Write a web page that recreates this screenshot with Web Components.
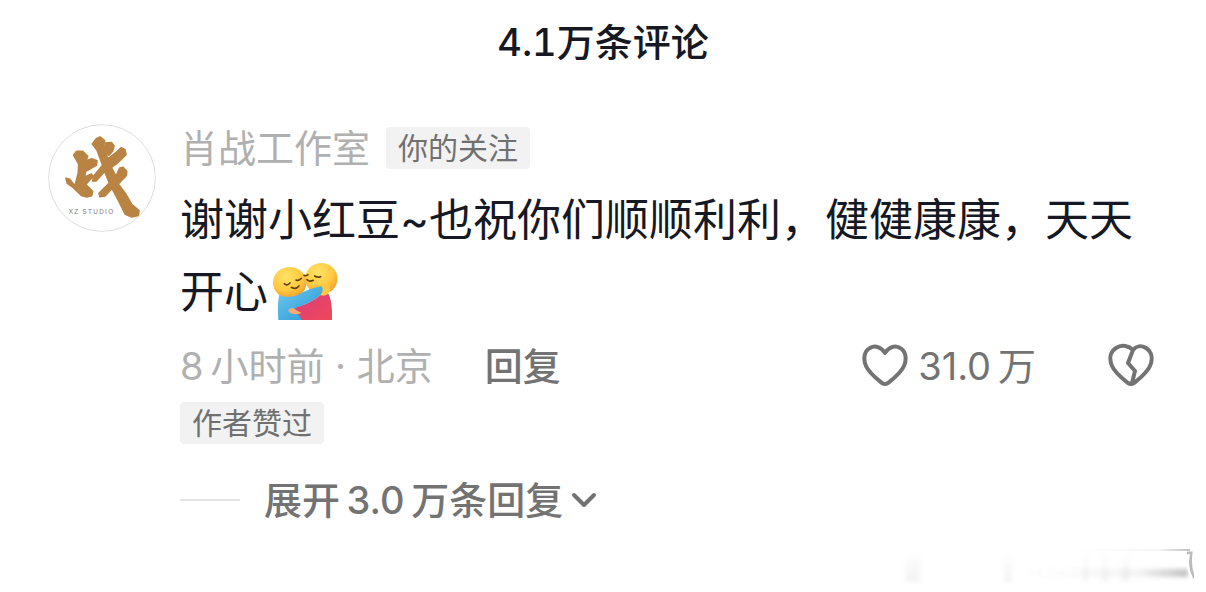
<!DOCTYPE html>
<html lang="zh-CN">
<head>
<meta charset="utf-8">
<title>评论</title>
<style>
    body {
        margin: 0;
        background: #fff;
        color: #161823;
        font-family: Inter, "Noto Sans CJK SC", sans-serif;
    }
</style>
</head>
<body>
<comment-panel>
    <span slot="title">4.1万条评论</span>
    <comment-item>
        <studio-avatar slot="avatar"></studio-avatar>
        <span slot="name">肖战工作室</span>
        <comment-tag slot="relation">你的关注</comment-tag>
        谢谢小红豆~也祝你们顺顺利利，健健康康，天天开心<hug-emoji></hug-emoji>
        <span slot="time">8&thinsp;小时前 · 北京</span>
        <span slot="likes">31.0&thinsp;万</span>
        <comment-tag slot="liked">作者赞过</comment-tag>
        <span slot="replies">展开&thinsp;3.0&thinsp;万条回复</span>
    </comment-item>
    <faded-mark slot="mark"></faded-mark>
</comment-panel>

<script>
class CommentPanel extends HTMLElement {
    constructor() {
        super();
        this.attachShadow({ mode: 'open' });
        this.shadowRoot.innerHTML = `
        <style>
            :host {
                display: block;
                padding: 18px 48px 0;
            }
            h1 {
                margin: 0 0 58px;
                font-size: 38px;
                line-height: 48px;
                font-weight: 500;
                font-variant-numeric: tabular-nums;
                text-align: center;
            }
            footer {
                display: flex;
                justify-content: flex-end;
                margin: 16px -36px 0 0;
            }
        </style>
        <h1><slot name="title"></slot></h1>
        <slot></slot>
        <footer><slot name="mark"></slot></footer>
        `;
    }
}

class CommentItem extends HTMLElement {
    constructor() {
        super();
        this.attachShadow({ mode: 'open' });
        this.shadowRoot.innerHTML = `
        <style>
            :host {
                display: grid;
                grid-template-columns: auto 1fr;
                column-gap: 24px;
                font-size: 38px;
                line-height: 48px;
            }
            button {
                display: flex;
                align-items: center;
                padding: 0;
                border: 0;
                background: none;
                color: #737373;
                font: inherit;
                cursor: pointer;
            }
            svg {
                display: block;
                fill: none;
                stroke: currentColor;
                stroke-width: 4;
                stroke-linecap: round;
                stroke-linejoin: round;
            }
            .row {
                display: flex;
                align-items: center;
                height: 48px;
            }
            .head {
                gap: 16px;
                color: #b0b0b0;
            }
            p {
                margin: 12px 0;
                font-size: 44px;
                line-height: 72px;
            }
            .time {
                color: #b0b0b0;
            }
            .reply {
                margin-left: 52px;
                font-weight: 500;
            }
            .like {
                gap: 10px;
                margin-left: auto;
            }
            .dislike {
                margin: 0 4px 0 72px;
            }
            .liked {
                display: flex;
                margin: 12px 0 32px;
            }
            .more {
                gap: 24px;
            }
            .more::before {
                content: '';
                width: 60px;
                height: 2px;
                background: #e3e3e3;
            }
            .more button {
                gap: 8px;
                font-weight: 500;
            }
        </style>
        <slot name="avatar"></slot>
        <div>
            <div class="row head">
                <slot name="name"></slot>
                <slot name="relation"></slot>
            </div>
            <p><slot></slot></p>
            <div class="row">
                <span class="time"><slot name="time"></slot></span>
                <button class="reply" type="button">回复</button>
                <button class="like" type="button">
                    <svg width="46" height="46" viewBox="0 0 46 46" aria-hidden="true">
                        <path d="M23 10C19 4 13 2 8 5C2 8 1 16 4 23C7 30 15 36 20 40Q23 42 26 40C31 36 39 30 42 23C45 16 44 8 38 5C33 2 27 4 23 10Z"/>
                    </svg>
                    <slot name="likes"></slot>
                </button>
                <button class="dislike" type="button" aria-label="不喜欢">
                    <svg width="46" height="46" viewBox="0 0 46 46" aria-hidden="true">
                        <path d="M25 7C21 3 14 1 8 5C2 9 1 16 4 23C7 30 15 36 20 40Q23 42 26 40C31 36 39 30 42 23C45 16 44 9 38 5C33 2 28 3 25 7L20 20L27 28L24 40"/>
                    </svg>
                </button>
            </div>
            <div class="liked"><slot name="liked"></slot></div>
            <div class="row more">
                <button type="button">
                    <slot name="replies"></slot>
                    <svg width="26" height="18" viewBox="0 0 26 18" aria-hidden="true">
                        <path d="M3 4L13 14L23 4"/>
                    </svg>
                </button>
            </div>
        </div>
        `;
    }
}

class CommentTag extends HTMLElement {
    constructor() {
        super();
        this.attachShadow({ mode: 'open' });
        this.shadowRoot.innerHTML = `
        <style>
            :host {
                display: inline-block;
                padding: 0 12px;
                border-radius: 4px;
                background: #f2f2f3;
                color: #707070;
                font-size: 30px;
                line-height: 42px;
            }
        </style>
        <slot></slot>
        `;
    }
}

class StudioAvatar extends HTMLElement {
    constructor() {
        super();
        this.attachShadow({ mode: 'open' });
        this.shadowRoot.innerHTML = `
        <style>
            :host {
                display: block;
                width: 108px;
                height: 108px;
            }
            svg {
                display: block;
            }
        </style>
        <svg width="108" height="108" viewBox="24 27 324 324" role="img" aria-label="XZ STUDIO">
            <circle cx="186" cy="189" r="160" fill="#fff" stroke="#dedede" stroke-width="3"/>
            <g fill="#b98344" stroke="#b98344" stroke-width="5" stroke-linejoin="round">
                <path d="M101 120L110 109L128 109L143 124L137 139L155 131L171 137L169 151L137 169L133 187L154 177L159 184L137 208L158 230L155 242L140 246L124 241L100 218L82 205L78 190L89 193L105 213L115 173L116 147Z"/>
                <path d="M157 87L169 71L180 66L194 77L190 94L204 132L232 109L244 98L255 104L258 119L231 145L214 157L228 184L239 159L249 157L260 169L259 181L235 207L257 237L275 268L297 287L295 301L275 306L256 298L236 258L216 220L195 243L180 245L177 235L208 204L194 169L168 198L158 198L161 183L188 151L171 105Z"/>
                <path d="M196 84L215 83L222 93L218 108L207 121L198 111L194 98Z"/>
            </g>
            <text x="86" y="297" font-family="Liberation Sans, sans-serif" font-size="19" letter-spacing="4" fill="#82796f">XZ STUDIO</text>
        </svg>
        `;
    }
}

class HugEmoji extends HTMLElement {
    constructor() {
        super();
        this.attachShadow({ mode: 'open' });
        this.shadowRoot.innerHTML = `
        <style>
            :host {
                display: inline-block;
                margin-left: 4px;
                padding-bottom: 8px;
                vertical-align: middle;
            }
            svg {
                display: block;
            }
        </style>
        <svg width="66" height="60" viewBox="36 21 198 180" role="img" aria-label="拥抱">
            <defs>
                <radialGradient id="face" cx=".4" cy=".3" r=".75">
                    <stop offset="0" stop-color="#ffe366"/>
                    <stop offset=".6" stop-color="#ffc941"/>
                    <stop offset="1" stop-color="#f19a26"/>
                </radialGradient>
                <linearGradient id="blue" x2="1" y2="1">
                    <stop offset="0" stop-color="#73c9ed"/>
                    <stop offset="1" stop-color="#2297d8"/>
                </linearGradient>
                <linearGradient id="red" x2="1" y2="1">
                    <stop offset="0" stop-color="#d94079"/>
                    <stop offset="1" stop-color="#f0475a"/>
                </linearGradient>
            </defs>
            <path d="M104 158C136 150 180 135 190 114L205 117Q216 136 216 195H100Z" fill="url(#red)"/>
            <ellipse cx="184" cy="71" rx="48" ry="47" fill="url(#face)"/>
            <ellipse cx="89" cy="83" rx="50" ry="47" fill="url(#face)"/>
            <path d="M58 119Q82 132 114 119Q148 100 185 93Q194 107 183 119Q151 145 104 160L125 195H55Q51 142 58 119Z" fill="url(#blue)"/>
            <path d="M104 160Q151 145 183 119L205 117Q216 136 216 195H125L120 174Z" fill="url(#red)"/>
            <path d="M187 94Q196 83 207 91Q216 104 204 117Q193 126 181 120Q192 109 187 94Z" fill="#ffc744"/>
            <path d="M85 164Q98 154 108 165L125 174Q101 183 86 171Z" fill="#f4aa70"/>
            <g fill="none" stroke="#684013" stroke-width="5" stroke-linecap="round">
                <path d="M73 86Q80 94 90 84M108 75Q117 79 124 70M94 97Q107 105 117 93M132 61Q137 64 144 59M164 63Q172 69 182 65M141 74Q149 82 160 76"/>
            </g>
        </svg>
        `;
    }
}

class FadedMark extends HTMLElement {
    constructor() {
        super();
        this.attachShadow({ mode: 'open' });
        this.shadowRoot.innerHTML = `
        <style>
            :host {
                display: block;
            }
            svg {
                display: block;
            }
        </style>
        <svg width="300" height="44" viewBox="0 0 300 44" aria-hidden="true">
            <defs>
                <linearGradient id="fade">
                    <stop offset="0" stop-color="#777" stop-opacity="0"/>
                    <stop offset=".7" stop-color="#777" stop-opacity=".08"/>
                    <stop offset="1" stop-color="#777" stop-opacity=".45"/>
                </linearGradient>
                <linearGradient id="down" x2="0" y2="1">
                    <stop offset="0" stop-color="#999" stop-opacity="0"/>
                    <stop offset="1" stop-color="#999" stop-opacity=".12"/>
                </linearGradient>
                <filter id="soft" x="-10%" y="-50%" width="120%" height="200%">
                    <feGaussianBlur stdDeviation="2"/>
                </filter>
            </defs>
            <g filter="url(#soft)" fill="url(#down)">
                <path d="M12 10H26V42H12ZM110 10H118V42H110ZM189 10H194V42H189ZM208 10H214V42H208ZM228 10H236V42H228Z"/>
                <path d="M130 29H294V37H130Z" fill="url(#fade)"/>
            </g>
            <path d="M190 9H296V11H190Z" fill="url(#fade)"/>
            <path d="M293 13H297Q295 27 300 38" fill="none" stroke="#bbb" stroke-width="3"/>
            <path d="M295 14Q292 28 298 38" fill="none" stroke="#fff" stroke-width="2"/>
        </svg>
        `;
    }
}

customElements.define('comment-panel', CommentPanel);
customElements.define('comment-item', CommentItem);
customElements.define('comment-tag', CommentTag);
customElements.define('studio-avatar', StudioAvatar);
customElements.define('hug-emoji', HugEmoji);
customElements.define('faded-mark', FadedMark);
</script>
</body>
</html>
